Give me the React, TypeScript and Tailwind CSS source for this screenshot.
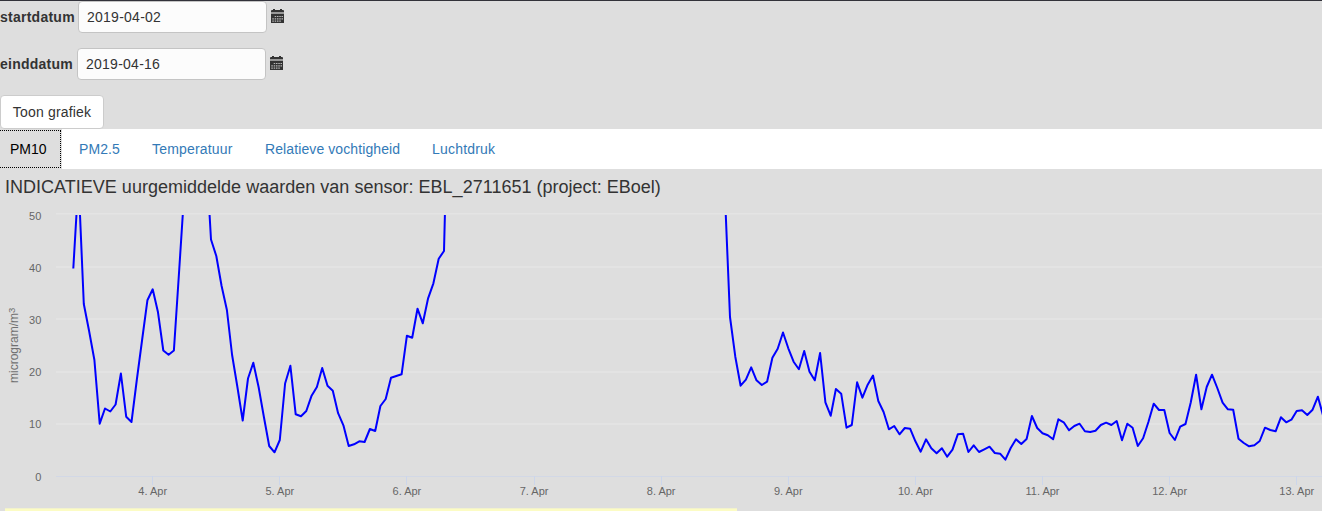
import React from "react";

const FIRST_HOUR = -15;
const HOUR_WIDTH = 5.2965;
const DAY_START = 152.7;

// Vertical position of the line for each hour.
const early = [
  268.5, 180, 304, 331, 360, 423.7, 408.5, 411.5, 404.5, 373.5, 416.7, 422, 380, 340, 300.3,
  289.3, 312.3, 350.5, 354.8, 350.5, 270, 188, 120, 90, 90, 148, 239.5, 256, 286, 310, 355, 387,
  420.5, 378.5, 362.8, 387, 417, 446, 452.3, 440, 383.5, 365.8, 414.3, 416.3, 411, 395.7, 387,
  368, 385.8, 390.7, 413.2, 425.3, 446, 444.3, 441.3, 442, 429, 431, 406, 399, 377.7, 376, 374.3,
  335.7, 337.7, 308.7, 323.3, 298.3, 283.3, 258.7, 251, 39,
];

const LATE_HOUR = 108;
const late = [
  189, 317, 356.7, 385.7, 379.7, 367.3, 380.3, 385, 381.7, 357.7, 348.7, 332.5, 348.3, 361.7,
  369.3, 351, 371.7, 380.3, 353, 402.3, 415.7, 389, 393.7, 427.7, 425, 382.3, 397.7, 384.7, 375.5,
  401, 412, 429.3, 426, 434.3, 428, 428.7, 441.3, 451.7, 439.3, 448.3, 453.3, 448.3, 456.7, 449.7,
  434.3, 433.7, 452, 445.3, 452, 449.3, 446.7, 453, 453.7, 459.7, 448, 439.3, 444, 439, 416, 428,
  433.3, 435.3, 439.3, 419.3, 422.3, 430.3, 426, 423.7, 431.3, 432, 430.7, 425, 422.7, 425, 421,
  440.3, 423.7, 427.7, 446, 438.3, 422, 403.7, 410, 410, 433, 440, 426.7, 424, 402.3, 374.7, 409.3,
  387, 374.7, 388, 402.7, 409.3, 409.7, 438.7, 443, 446.3, 445.3, 441, 427.7, 430, 431.3, 417.3,
  422.3, 419.7, 411, 410.3, 415, 409.7, 396.7, 416,
];

const toPoints = (values: number[], start: number) =>
  values.map((y, i) => `${(DAY_START + (start + i) * HOUR_WIDTH).toFixed(1)},${y}`).join(" ");

const gridLines = [
  { label: "50", y: 213.8, text: 220 },
  { label: "40", y: 267, text: 272 },
  { label: "30", y: 319, text: 324 },
  { label: "20", y: 372, text: 376 },
  { label: "10", y: 424, text: 428 },
];

const days = [4, 5, 6, 7, 8, 9, 10, 11, 12, 13];

function CalendarIcon() {
  return (
    <svg width="13" height="14" viewBox="0 0 13 14" className="-mt-[2px] ml-1 shrink-0" fill="#333">
      <path d="M2 0h2v1h5V0h2v1h1q1 0 1 1v1H0V2q0-1 1-1h1z" />
      <path d="M0 3h13v2H0z" fill="#999" />
      <path d="M0 5h13v9H0z" />
      <path
        d="M3.7 6.9h1.5v1.2H3.7zM6 6.9h1.5v1.2H6zM8.3 6.9h1.5v1.2H8.3zM10.5 6.9H12v1.2h-1.5zM1.3 9.2h1.5v1.2H1.3zM3.7 9.2h1.5v1.2H3.7zM6 9.2h1.5v1.2H6zM8.3 9.2h1.5v1.2H8.3zM10.5 9.2H12v1.2h-1.5zM1.3 11.6h1.5v1.2H1.3zM3.7 11.6h1.5v1.2H3.7zM6 11.6h1.5v1.2H6zM8.3 11.6h1.5v1.2H8.3z"
        fill="#b8b8b8"
      />
    </svg>
  );
}

function DateField({ label, value, labelWidth }: { label: string; value: string; labelWidth: string }) {
  return (
    <label className="flex h-8 items-center">
      <span className={`${labelWidth} shrink-0 pt-px text-[14px] font-bold tracking-[0.25px]`}>{label}</span>
      <input
        defaultValue={value}
        className="h-8 w-[189px] rounded-[4px] border border-[#c4c4c4] bg-[#fcfcfc] px-2 text-[14px] tracking-[0.25px] outline-none"
      />
      <CalendarIcon />
    </label>
  );
}

function Chart() {
  return (
    <svg width="1322" height="303" viewBox="0 205 1322 303" className="block" fontSize="11">
      <defs>
        <clipPath id="plot">
          <rect x="56" y="215" width="1266" height="262" />
        </clipPath>
      </defs>
      {gridLines.map((g) => (
        <g key={g.label}>
          <path d={`M56 ${g.y}H1322`} stroke="#e4e4e4" strokeWidth="1.6" />
          <text x="41.3" y={g.text} textAnchor="end" fill="#666">{g.label}</text>
        </g>
      ))}
      <text x="41.3" y="481" textAnchor="end" fill="#666">0</text>
      <path d="M56 476.5H1322" stroke="#d2d8e6" />
      {days.map((day, i) => {
        const x = DAY_START + i * HOUR_WIDTH * 24;
        return (
          <g key={day}>
            <path d={`M${Math.floor(x) + 0.5} 476V485`} stroke="#ccd6eb" />
            <text x={x} y="495" textAnchor="middle" fill="#666">{`${day}. Apr`}</text>
          </g>
        );
      })}
      <text transform="translate(18 383) rotate(-90)" fontSize="12" fill="#707070">
        microgram/m<tspan dy="-3.5" fontSize="9.5">3</tspan>
      </text>
      <g clipPath="url(#plot)" fill="none" stroke="#00f" strokeWidth="2" strokeLinejoin="round">
        <polyline points={toPoints(early, FIRST_HOUR)} />
        <polyline points={toPoints(late, LATE_HOUR)} />
      </g>
    </svg>
  );
}

export default function App() {
  return (
    <div className="flex h-[511px] w-[1322px] flex-col overflow-hidden bg-[#dedede] font-['Liberation_Sans',Arial,sans-serif] text-[14px] text-[#333]">
      <div className="h-px shrink-0 bg-[#32323a]" />
      <form className="flex h-32 shrink-0 flex-col items-start">
        <DateField label="startdatum" value="2019-04-02" labelWidth="w-[78px]" />
        <div className="mt-[15px]">
          <DateField label="einddatum" value="2019-04-16" labelWidth="w-[77px]" />
        </div>
        <button
          type="button"
          className="mt-[15px] h-[34px] w-[104px] shrink-0 rounded-[4px] border border-[#ccc] bg-white text-center tracking-[0.18px]"
        >
          Toon grafiek
        </button>
      </form>
      <nav className="flex h-10 shrink-0 items-stretch bg-white text-[#337ab7]">
        <div className="flex w-[62px] bg-[#dedede] py-px pr-px">
          <a className="flex w-full items-center border border-l-0 border-dotted border-black pl-2.5 text-black">PM10</a>
        </div>
        <a className="flex w-[73px] items-center pl-[17px] tracking-[0.1px]">PM2.5</a>
        <a className="flex w-[113px] items-center pl-[17px] tracking-[0.18px]">Temperatuur</a>
        <a className="flex w-[167px] items-center pl-[17px] tracking-[0.1px]">Relatieve vochtigheid</a>
        <a className="flex items-center pl-[17px] tracking-[0.2px]">Luchtdruk</a>
      </nav>
      <h4 className="h-9 shrink-0 whitespace-nowrap pl-[5px] text-[18px] leading-9 tracking-[0.015px]">
        INDICATIEVE uurgemiddelde waarden van sensor: EBL_2711651 (project: EBoel)
      </h4>
      <Chart />
      <div className="ml-[5px] h-[3px] w-[732px] shrink-0 border-t border-[#f2f2cc] bg-[#fcfcc4]" />
    </div>
  );
}
